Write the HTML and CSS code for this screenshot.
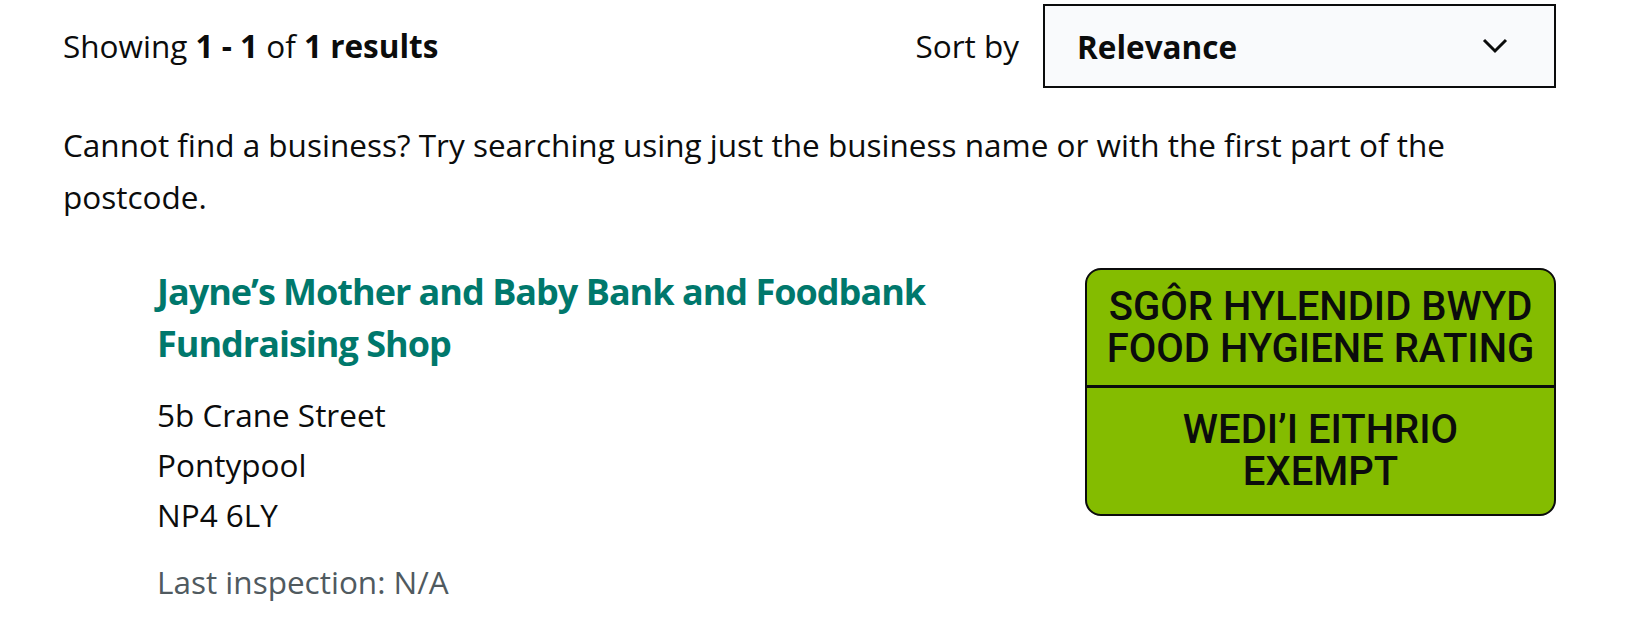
FILE: index.html
```html
<!DOCTYPE html>
<html lang="en">
<head>
<meta charset="utf-8">
<title>Search results</title>
<link rel="stylesheet" href="styles.css">
</head>
<body>
<main class="page">
  <div class="toolbar">
    <p class="count">Showing <strong>1 - 1</strong> of <strong>1 results</strong></p>
    <div class="sort">
      <label class="sort-label" for="sort">Sort by</label>
      <div class="select">
        <span class="select-value">Relevance</span>
        <svg class="chevron" width="26" height="16" viewBox="0 0 26 16"><path d="M2 2 L13 13 L24 2" fill="none" stroke="#0b0c0c" stroke-width="3"/></svg>
      </div>
    </div>
  </div>
  <p class="hint">Cannot find a business? Try searching using just the business name or with the first part of the postcode.</p>
  <section class="result">
    <div class="info">
      <h2 class="name">Jayne’s Mother and Baby Bank and Foodbank Fundraising Shop</h2>
      <p class="address">5b Crane Street<br>Pontypool<br>NP4 6LY</p>
      <p class="inspection">Last inspection: N/A</p>
    </div>
    <div class="badge">
      <div class="badge-top">
        <span>SGÔR HYLENDID BWYD</span>
        <span>FOOD HYGIENE RATING</span>
      </div>
      <div class="badge-bottom">
        <span>WEDI’I EITHRIO</span>
        <span>EXEMPT</span>
      </div>
    </div>
  </section>
</main>
</body>
</html>
```
FILE: styles.css
```css
* { box-sizing: border-box; }
body {
  margin: 0;
  background: #fff;
  color: #0b0c0c;
  font-family: "Open Sans", "Noto Sans", sans-serif;
  font-size: 31.5px;
}
.page {
  padding: 4px 85px 0 63px;
}
.toolbar {
  display: flex;
  justify-content: space-between;
  align-items: center;
  height: 84px;
}
.count {
  margin: 0;
  line-height: 40px;
}
.count strong { font-weight: 700; }
.sort {
  display: flex;
  align-items: center;
  gap: 24px;
}
.sort-label { line-height: 40px; }
.select {
  width: 513px;
  height: 84px;
  border: 2px solid #0b0c0c;
  background: #f9fafc;
  display: flex;
  align-items: center;
  justify-content: space-between;
  padding: 0 46px 0 32px;
}
.select-value { font-weight: 700; }
.hint {
  margin: 31px 0 0;
  line-height: 52px;
  width: 1420px;
}
.result {
  display: flex;
  justify-content: space-between;
  margin-top: 43px;
  padding-left: 94px;
}
.info { width: 820px; }
.name {
  margin: 0;
  color: #00786c;
  font-size: 36px;
  font-weight: 700;
  letter-spacing: -1px;
  line-height: 52px;
}
.address {
  margin: 20px 0 0;
  line-height: 50px;
}
.inspection {
  margin: 17px 0 0;
  line-height: 50px;
  color: #505a5f;
}
.badge {
  width: 471px;
  height: 248px;
  margin-top: 2px;
  background: #84bc00;
  border: 2px solid #0b0c0c;
  border-radius: 16px;
  display: flex;
  flex-direction: column;
  font-family: "Roboto", "DejaVu Sans", sans-serif;
  font-weight: 500;
  font-size: 40px;
  color: #0b0c0c;
}
.badge-top, .badge-bottom {
  display: flex;
  flex-direction: column;
  align-items: center;
  justify-content: center;
}
.badge-top span, .badge-bottom span {
  display: block;
  height: 42px;
  line-height: 42px;
}
.badge-top {
  height: 118px;
  border-bottom: 3px solid #0b0c0c;
}
.badge-bottom { flex: 1; }
```
